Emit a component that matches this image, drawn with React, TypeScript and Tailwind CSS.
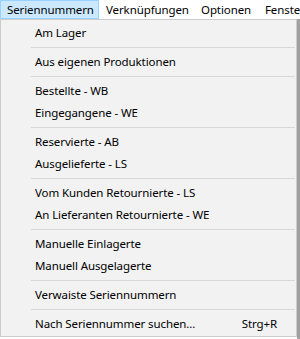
import React from "react";

type Entry = { label: string; shortcut?: string } | "sep";

const entries: Entry[] = [
  { label: "Am Lager" },
  "sep",
  { label: "Aus eigenen Produktionen" },
  "sep",
  { label: "Bestellte - WB" },
  { label: "Eingegangene - WE" },
  "sep",
  { label: "Reservierte - AB" },
  { label: "Ausgelieferte - LS" },
  "sep",
  { label: "Vom Kunden Retournierte - LS" },
  { label: "An Lieferanten Retournierte - WE" },
  "sep",
  { label: "Manuelle Einlagerte" },
  { label: "Manuell Ausgelagerte" },
  "sep",
  { label: "Verwaiste Seriennummern" },
  "sep",
  { label: "Nach Seriennummer suchen...", shortcut: "Strg+R" },
];

const App = () => {
  return (
    <div
      className="w-[300px] h-[339px] bg-white overflow-hidden text-[11.5px] tracking-[-0.1px] text-black"
      style={{ fontFamily: '"Segoe UI", "Noto Sans", sans-serif' }}
    >
      <div className="flex h-[19px] items-center whitespace-nowrap">
        <div className="h-[19px] w-[99px] shrink-0 pl-[6px] flex items-center bg-[#cce8ff] border border-[#99d1ff]">
          Seriennummern
        </div>
        <div className="pl-[7px] w-[102px] shrink-0">Verknüpfungen</div>
        <div className="w-[64px] shrink-0">Optionen</div>
        <div>Fenster</div>
      </div>

      <div className="flex">
        <div className="w-[297px] h-[318px] bg-[#f2f2f2] border border-[#cccccc] pt-[2px] flex flex-col">
          {entries.map((e, i) =>
            e === "sep" ? (
              <div key={i} className="h-[7px] flex items-center pl-[30px] pr-[1px]">
                <div className="h-px w-full bg-[#d7d7d7]" />
              </div>
            ) : (
              <div key={i} className="h-[22px] flex items-center pl-[34px] pr-[19px]">
                <span className="flex-1">{e.label}</span>
                {e.shortcut && <span>{e.shortcut}</span>}
              </div>
            )
          )}
        </div>
        <div className="w-[3px] h-[320px] bg-[#a0a0a0]" />
      </div>
    </div>
  );
};

export default App;
